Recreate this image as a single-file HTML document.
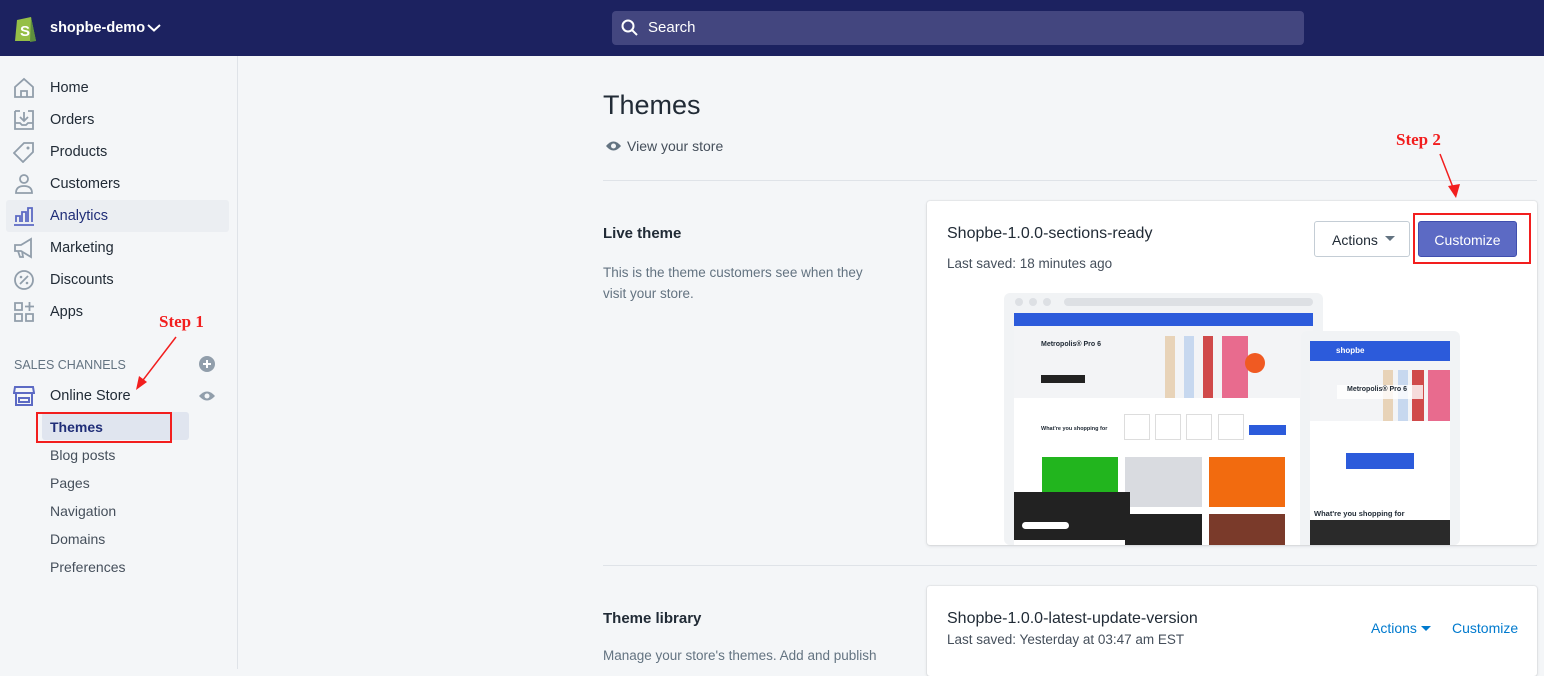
<!DOCTYPE html>
<html><head><meta charset="utf-8"><style>
*{box-sizing:border-box;margin:0;padding:0}
body{width:1544px;height:669px;overflow:hidden;background:#f4f6f8;font-family:"Liberation Sans",sans-serif;color:#212b36;position:relative}
.abs{position:absolute}
.top{left:0;top:0;width:1544px;height:56px;background:#1c2260}
.search{left:612px;top:11px;width:692px;height:34px;background:#43467f;border-radius:4px;color:#fff;font-size:15px;padding:8px 0 0 36px}
.side{left:0;top:56px;width:238px;height:613px;border-right:1px solid #dfe3e8;background:#f4f6f8}
.nav{position:absolute;left:50px;font-size:14.5px;color:#212b36}
.sub{position:absolute;left:50px;font-size:14px;color:#454f5b}
.ic{position:absolute;left:13px;width:22px;height:22px}
.red{color:#f21e1e;font-family:"Liberation Serif",serif;font-weight:bold;font-size:17px;position:absolute}
.card{background:#fff;border-radius:3px;box-shadow:0 0 0 1px rgba(63,63,68,.05),0 1px 3px rgba(63,63,68,.15)}
</style></head><body>
<div class="abs top"></div>
<svg class="abs" style="left:13px;top:13px" width="26" height="30" viewBox="0 0 26 30"><path d="M4 7 L18 4 L23 28 L2 28 Z" fill="#95bf47"/><path d="M18 4 L23 28 L17 29 Z" fill="#5e8e3e"/><text x="7" y="23" font-size="15" font-weight="bold" fill="#fff" font-family="Liberation Sans">S</text></svg>
<div class="abs" style="left:50px;top:20px;color:#fff;font-weight:bold;font-size:14.5px">shopbe-demo</div>
<svg class="abs" style="left:146px;top:23px" width="16" height="10"><path d="M2 2 L8 7.5 L14 2" stroke="#fff" stroke-width="2" fill="none"/></svg>
<div class="abs search">Search</div>
<svg class="abs" style="left:621px;top:19px" width="18" height="18"><circle cx="7" cy="7" r="5.5" stroke="#fff" stroke-width="2" fill="none"/><path d="M11 11 L16 16" stroke="#fff" stroke-width="2"/></svg>

<div class="abs side"></div>
<div class="abs" style="left:6px;top:200px;width:223px;height:32px;background:#ebeef2;border-radius:3px"></div>
<svg class="ic" style="top:77px" viewBox="0 0 22 22"><path d="M2 10 L11 2 L20 10 V20 H2 Z M8 20 V14 H14 V20" stroke="#919eab" stroke-width="1.8" fill="none"/></svg>
<div class="nav" style="top:80px">Home</div>
<svg class="ic" style="top:109px" viewBox="0 0 22 22"><path d="M2 2 H7 M15 2 H20 V20 H2 V2 M2 14 H7 L9 16 H13 L15 14 H20 M11 3 V11 M7 8 L11 12 L15 8" stroke="#919eab" stroke-width="1.8" fill="none"/></svg>
<div class="nav" style="top:112px">Orders</div>
<svg class="ic" style="top:141px" viewBox="0 0 22 22"><path d="M11 2 H20 V11 L10 21 L1 12 Z" stroke="#919eab" stroke-width="1.8" fill="none"/><circle cx="15" cy="7" r="1.5" fill="#919eab"/></svg>
<div class="nav" style="top:144px">Products</div>
<svg class="ic" style="top:173px" viewBox="0 0 22 22"><circle cx="11" cy="6" r="4" stroke="#919eab" stroke-width="1.8" fill="none"/><path d="M3 20 Q3 13 11 13 Q19 13 19 20 Z" stroke="#919eab" stroke-width="1.8" fill="none"/></svg>
<div class="nav" style="top:176px">Customers</div>
<svg class="ic" style="top:205px" viewBox="0 0 22 22"><path d="M1 20 H21 M3 17 V11 H7 V17 M9 17 V7 H13 V17 M15 17 V3 H19 V17" stroke="#5c6ac4" stroke-width="1.8" fill="none"/></svg>
<div class="nav" style="top:208px;color:#202e78">Analytics</div>
<svg class="ic" style="top:237px" viewBox="0 0 22 22"><path d="M2 8 H8 L18 2 V20 L8 14 H2 Z M5 14 L7 20 H10 L9 14" stroke="#919eab" stroke-width="1.8" fill="none"/></svg>
<div class="nav" style="top:240px">Marketing</div>
<svg class="ic" style="top:269px" viewBox="0 0 22 22"><circle cx="11" cy="11" r="9" stroke="#919eab" stroke-width="1.8" fill="none"/><path d="M7 15 L15 7" stroke="#919eab" stroke-width="1.8"/><circle cx="8" cy="8" r="1.3" fill="#919eab"/><circle cx="14" cy="14" r="1.3" fill="#919eab"/></svg>
<div class="nav" style="top:272px">Discounts</div>
<svg class="ic" style="top:301px" viewBox="0 0 22 22"><path d="M2 2 H9 V9 H2 Z M2 13 H9 V20 H2 Z M13 13 H20 V20 H13 Z M16.5 1 V10 M12 5.5 H21" stroke="#919eab" stroke-width="1.8" fill="none"/></svg>
<div class="nav" style="top:304px">Apps</div>
<div class="abs" style="left:14px;top:358px;font-size:12.5px;color:#637381">SALES CHANNELS</div>
<svg class="abs" style="left:199px;top:356px" width="16" height="16"><circle cx="8" cy="8" r="8" fill="#919eab"/><path d="M8 4 V12 M4 8 H12" stroke="#fff" stroke-width="2"/></svg>
<svg class="ic" style="top:385px" viewBox="0 0 22 22"><path d="M2 2 H20 L21 8 H1 Z M3 8 V20 H19 V8 M6 13 H16 V17 H6 Z" stroke="#5c6ac4" stroke-width="2" fill="none"/></svg>
<div class="nav" style="top:388px">Online Store</div>
<svg class="abs" style="left:198px;top:390px" width="18" height="12"><path d="M1 6 Q9 -3 17 6 Q9 15 1 6Z" fill="#919eab"/><circle cx="9" cy="6" r="2.5" fill="#f4f6f8"/></svg>
<div class="abs" style="left:42px;top:412px;width:147px;height:28px;background:#e0e5ef;border-radius:3px"></div>
<div class="abs" style="left:36px;top:412px;width:136px;height:31px;border:2px solid #f21e1e"></div>
<div class="sub" style="top:419px;color:#202e78;font-weight:bold;font-size:14px">Themes</div>
<div class="sub" style="top:447px">Blog posts</div>
<div class="sub" style="top:475px">Pages</div>
<div class="sub" style="top:503px">Navigation</div>
<div class="sub" style="top:531px">Domains</div>
<div class="sub" style="top:559px">Preferences</div>
<div class="red" style="left:159px;top:312px">Step 1</div>
<svg class="abs" style="left:130px;top:334px" width="50" height="60"><path d="M46 3 L10 50" stroke="#f21e1e" stroke-width="1.5"/><path d="M6 56 L9 42 L17 48 Z" fill="#f21e1e"/></svg>

<div class="abs" style="left:603px;top:90px;font-size:27px">Themes</div>
<svg class="abs" style="left:605px;top:140px" width="17" height="12"><path d="M1 6 Q8.5 -3 16 6 Q8.5 15 1 6Z" fill="#637381"/><circle cx="8.5" cy="6" r="2.5" fill="#f4f6f8"/></svg>
<div class="abs" style="left:627px;top:138px;font-size:14px;color:#454f5b">View your store</div>
<div class="abs" style="left:603px;top:180px;width:934px;height:1px;background:#dfe3e8"></div>
<div class="abs" style="left:603px;top:565px;width:934px;height:1px;background:#dfe3e8"></div>
<div class="abs" style="left:603px;top:225px;font-size:15px;font-weight:bold;color:#212b36">Live theme</div>
<div class="abs" style="left:603px;top:262px;font-size:13.5px;color:#637381;line-height:21px;width:280px">This is the theme customers see when they visit your store.</div>
<div class="abs" style="left:603px;top:610px;font-size:15px;font-weight:bold">Theme library</div>
<div class="abs" style="left:603px;top:648px;font-size:13.5px;color:#637381">Manage your store's themes. Add and publish</div>

<div class="red" style="left:1396px;top:130px">Step 2</div>
<svg class="abs" style="left:1434px;top:152px" width="30" height="50"><path d="M6 2 L20 38" stroke="#f21e1e" stroke-width="1.5"/><path d="M22 46 L14 34 L26 32 Z" fill="#f21e1e"/></svg>

<div class="abs card" style="left:927px;top:201px;width:610px;height:344px"></div>
<div class="abs" style="left:947px;top:225px;font-size:16px">Shopbe-1.0.0-sections-ready</div>
<div class="abs" style="left:947px;top:256px;font-size:13.5px;color:#454f5b">Last saved: 18 minutes ago</div>
<div class="abs" style="left:1314px;top:221px;width:96px;height:36px;border:1px solid #c4cdd5;border-radius:3px;background:#fff;font-size:14px;padding:10px 0 0 17px;color:#212b36">Actions</div>
<svg class="abs" style="left:1385px;top:236px" width="10" height="6"><path d="M0 0 H10 L5 5Z" fill="#637381"/></svg>
<div class="abs" style="left:1418px;top:221px;width:99px;height:36px;background:#5c6ac4;border:1px solid #3f4eae;border-radius:3px;color:#fff;font-size:14px;text-align:center;padding-top:10px">Customize</div>
<div class="abs" style="left:1413px;top:213px;width:118px;height:51px;border:2px solid #f21e1e"></div>

<div class="abs" style="left:1004px;top:293px;width:319px;height:252px;background:#f1f3f5;border-radius:6px"></div>
<div class="abs" style="left:1015px;top:298px;width:8px;height:8px;border-radius:50%;background:#dde0e4"></div>
<div class="abs" style="left:1029px;top:298px;width:8px;height:8px;border-radius:50%;background:#dde0e4"></div>
<div class="abs" style="left:1043px;top:298px;width:8px;height:8px;border-radius:50%;background:#dde0e4"></div>
<div class="abs" style="left:1064px;top:298px;width:249px;height:8px;border-radius:4px;background:#dde0e4"></div>
<div class="abs" style="left:1014px;top:313px;width:299px;height:13px;background:#2c5bdb"></div>
<div class="abs" style="left:1014px;top:326px;width:299px;height:72px;background:#f3f4f6"></div>
<div class="abs" style="left:1041px;top:341px;font-size:7px;font-weight:bold">Metropolis® Pro 6</div>
<div class="abs" style="left:1041px;top:375px;width:44px;height:8px;background:#222"></div>
<div class="abs" style="left:1165px;top:336px;width:10px;height:62px;background:#e8d3b8"></div>
<div class="abs" style="left:1184px;top:336px;width:10px;height:62px;background:#c7d8ef"></div>
<div class="abs" style="left:1203px;top:336px;width:10px;height:62px;background:#d04a4a"></div>
<div class="abs" style="left:1222px;top:336px;width:26px;height:62px;background:#e86b8e"></div>
<div class="abs" style="left:1245px;top:353px;width:20px;height:20px;border-radius:50%;background:#f05a22"></div>
<div class="abs" style="left:1014px;top:398px;width:286px;height:147px;background:#fff"></div>
<div class="abs" style="left:1041px;top:426px;font-size:5.5px;font-weight:bold">What're you shopping for</div>
<div class="abs" style="left:1124px;top:414px;width:26px;height:26px;border:1px solid #ddd"></div>
<div class="abs" style="left:1155px;top:414px;width:26px;height:26px;border:1px solid #ddd"></div>
<div class="abs" style="left:1186px;top:414px;width:26px;height:26px;border:1px solid #ddd"></div>
<div class="abs" style="left:1218px;top:414px;width:26px;height:26px;border:1px solid #ddd"></div>
<div class="abs" style="left:1249px;top:425px;width:37px;height:10px;background:#2c5bdb"></div>
<div class="abs" style="left:1042px;top:457px;width:76px;height:50px;background:#22b51e"></div>
<div class="abs" style="left:1125px;top:457px;width:77px;height:50px;background:#d9dbe0"></div>
<div class="abs" style="left:1209px;top:457px;width:76px;height:50px;background:#f26b0f"></div>
<div class="abs" style="left:1125px;top:514px;width:77px;height:31px;background:#222"></div>
<div class="abs" style="left:1209px;top:514px;width:76px;height:31px;background:#7a3a2a"></div>
<div class="abs" style="left:1014px;top:492px;width:116px;height:48px;background:#222"></div>
<div class="abs" style="left:1022px;top:522px;width:47px;height:7px;background:#fff;border-radius:4px"></div>
<div class="abs" style="left:1301px;top:331px;width:159px;height:214px;background:#f1f3f5;border-radius:6px"></div>
<div class="abs" style="left:1310px;top:341px;width:140px;height:20px;background:#2c5bdb"></div>
<div class="abs" style="left:1336px;top:346px;font-size:8px;font-weight:bold;color:#fff">shopbe</div>
<div class="abs" style="left:1310px;top:361px;width:140px;height:60px;background:#f3f4f6"></div>
<div class="abs" style="left:1383px;top:370px;width:10px;height:51px;background:#e8d3b8"></div>
<div class="abs" style="left:1398px;top:370px;width:10px;height:51px;background:#c7d8ef"></div>
<div class="abs" style="left:1412px;top:370px;width:12px;height:51px;background:#d04a4a"></div>
<div class="abs" style="left:1428px;top:370px;width:22px;height:51px;background:#e86b8e"></div>
<div class="abs" style="left:1337px;top:385px;width:86px;height:14px;background:rgba(255,255,255,.8)"></div>
<div class="abs" style="left:1347px;top:386px;font-size:7px;font-weight:bold">Metropolis® Pro 6</div>
<div class="abs" style="left:1310px;top:421px;width:140px;height:100px;background:#fff"></div>
<div class="abs" style="left:1346px;top:453px;width:68px;height:16px;background:#2c5bdb"></div>
<div class="abs" style="left:1314px;top:509px;font-size:7.5px;font-weight:bold">What're you shopping for</div>
<div class="abs" style="left:1310px;top:520px;width:140px;height:25px;background:#2a2a2a"></div>

<div class="abs card" style="left:927px;top:586px;width:610px;height:90px"></div>
<div class="abs" style="left:947px;top:610px;font-size:16px">Shopbe-1.0.0-latest-update-version</div>
<div class="abs" style="left:947px;top:632px;font-size:13.5px;color:#454f5b">Last saved: Yesterday at 03:47 am EST</div>
<div class="abs" style="left:1371px;top:620px;font-size:14px;color:#007ace">Actions</div>
<svg class="abs" style="left:1421px;top:626px" width="10" height="6"><path d="M0 0 H10 L5 5Z" fill="#007ace"/></svg>
<div class="abs" style="left:1452px;top:620px;font-size:14px;color:#007ace">Customize</div>
</body></html>
